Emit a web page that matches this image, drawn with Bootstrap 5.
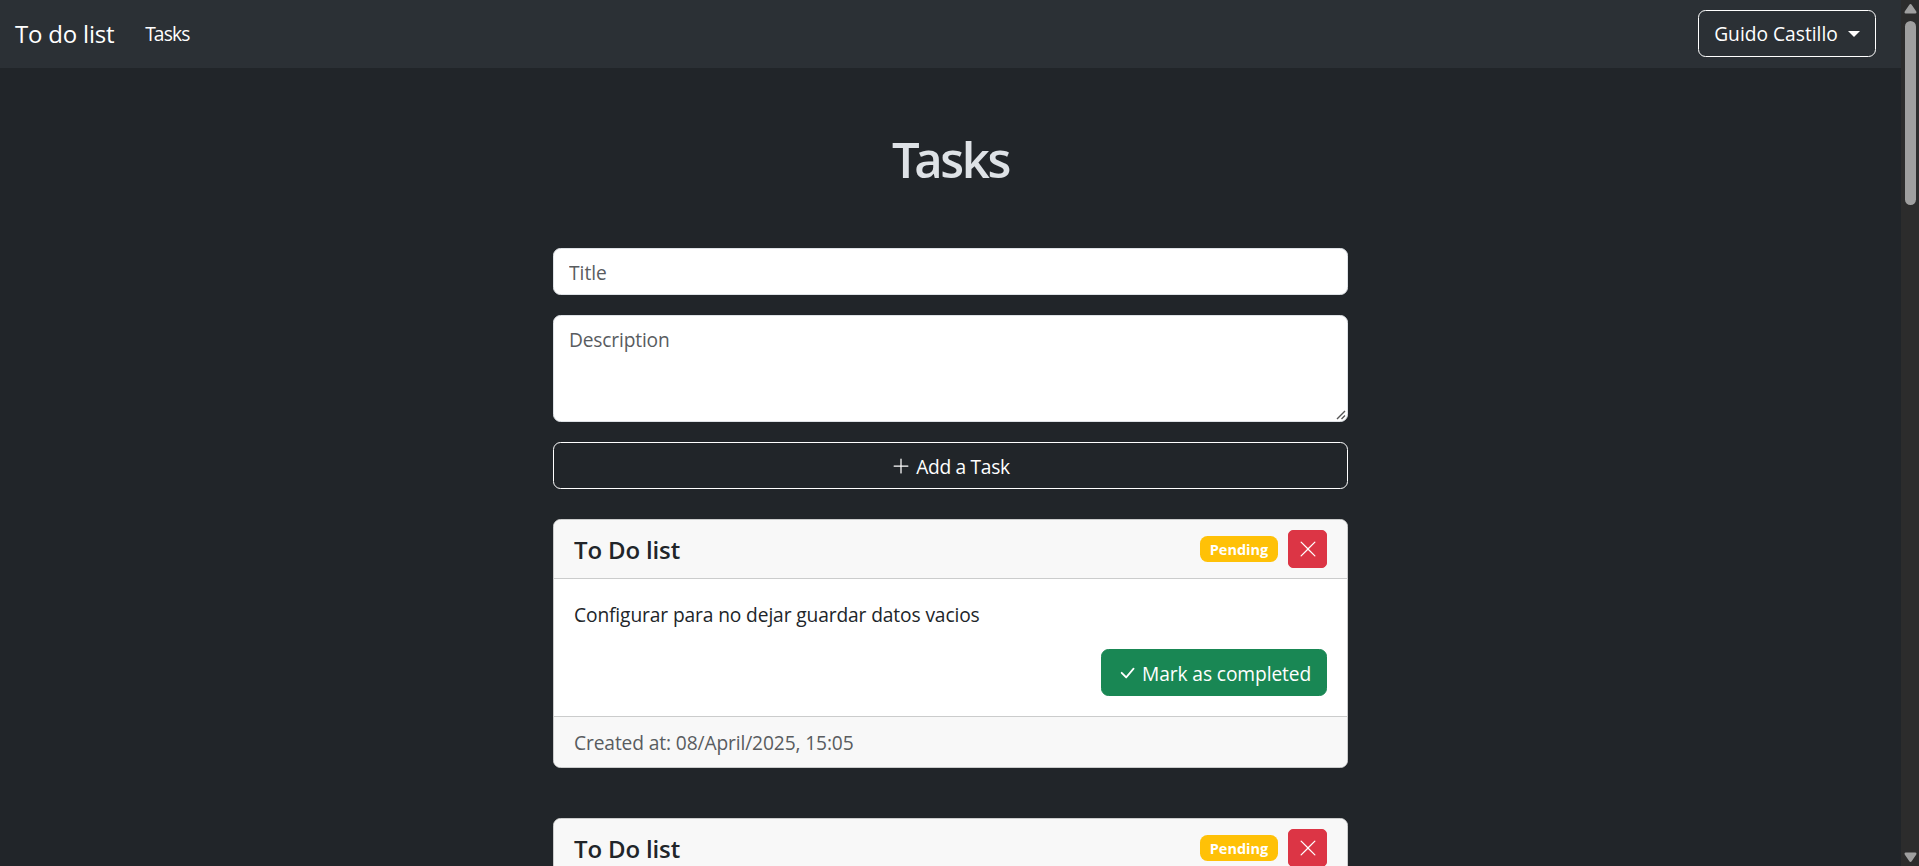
<!DOCTYPE html>
<html lang="en">
<head>
<meta charset="utf-8">
<meta name="viewport" content="width=device-width, initial-scale=1">
<title>To do list</title>
<link href="https://cdn.jsdelivr.net/npm/bootstrap@5.3.0/dist/css/bootstrap.min.css" rel="stylesheet">
<style>
  html { font-size: 20px; }
  body { font-family: "Open Sans", "Noto Sans", sans-serif; font-size: 19.2px; line-height: 30px; background: #212529; color: #212529; letter-spacing: -.12px; }
  .top-nav { background: #2b3035; height: 68px; padding: 10px 10px 11px 0; }
  .top-nav .navbar-brand { font-size: 24px; line-height: 37px; padding: 0; margin-right: 21px; letter-spacing: -.2px; }
  .top-nav .nav-link { letter-spacing: -.75px; color: #fff; padding: 9px 10px 9px; }
  .top-nav .nav-link .lead-cap { letter-spacing: -2.2px; }
  .btn { font-size: 19.2px; line-height: 30px; height: 47px; padding: 8.5px 15px 6.5px; border-radius: 7.5px; letter-spacing: -.1px; }
  .user-btn { width: 178px; padding-top: 7.5px; letter-spacing: 0; white-space: nowrap; }
  .user-btn::after { margin-left: 10px; border-top-width: 6px; border-left-width: 6px; border-right-width: 6px; vertical-align: 4px; }
  .page-title { color: #dee2e6; font-size: 49px; font-weight: 600; line-height: 60px; letter-spacing: -2.4px; margin: 61px 0 59px; }
  .page-title .lead-cap { letter-spacing: -5.5px; }
  .task-column { width: 795px; }
  .form-control, .form-control:focus { font-size: 19.2px; line-height: 30px; height: 47px; padding: 8.5px 15px 6.5px; border-color: #dee2e6; border-radius: 7.5px; color: #212529; background: #fff; }
  .form-control::placeholder { color: #595c5f; opacity: 1; }
  .form-control[name=title] { letter-spacing: 0; }
  textarea.form-control { height: 107px; min-height: 107px; letter-spacing: -.17px; resize: none; }
  .task-description { margin: 20px 0; }
  .resize-grip { right: 2px; bottom: 2px; width: 10px; height: 10px; stroke: #555; stroke-width: 1.4; }
  .add-btn { letter-spacing: -.3px; }
  .task-card { background: #fff; border: 1px solid #cbcccc; border-radius: 7.5px; margin-bottom: 50px; }
  .task-card .card-header { background: #f8f8f8; border-color: #cbcccc; height: 59px; padding: 0 20px; }
  .task-card .card-title { font-size: 24px; font-weight: 600; line-height: 30px; letter-spacing: -.15px; padding-top: 1px; }
  .task-card .card-body { padding: 20px; height: 137px; }
  .task-card .card-text { margin-bottom: 19px; line-height: 31px; }
  .task-card .card-footer { background: #f8f8f8; border-color: #cbcccc; color: #595c5f; height: 51px; padding: 11px 20px 9px; }
  .status-badge { width: 78px; height: 26px; font-size: 14.5px; line-height: 27px; padding: 0; border-radius: 7.5px; background: #ffc107; letter-spacing: 0; }
  .delete-btn { width: 39px; height: 38px; padding: 0; border-radius: 5px; }
  .btn-danger { background: #dc3545; }
  .btn-success { background: #198754; width: 226px; white-space: nowrap; }
  .glyph { width: 20px; height: 20px; fill: currentColor; flex: none; }
  .btn-success .glyph, .add-btn .glyph { margin-top: -2px; }
  .scroll-track { width: 18px; background: #2c2c2c; padding: 3px 0; }
  .scroll-thumb { width: 11px; height: 184px; border-radius: 6px; background: #9f9f9f; margin: 7px 0 auto 1px; }
  .scroll-arrow { width: 13px; height: 11px; fill: #9f9f9f; margin-left: 1px; }
</style>
</head>
<body class="d-flex vh-100 overflow-hidden">
<div class="flex-grow-1 overflow-hidden">
  <nav class="navbar navbar-expand navbar-dark top-nav">
    <div class="container-fluid">
      <a class="navbar-brand text-white" href="#">To do list</a>
      <ul class="navbar-nav me-auto">
        <li class="nav-item"><a class="nav-link" href="#"><span class="lead-cap">T</span>asks</a></li>
      </ul>
      <button class="btn btn-outline-light border-white text-white dropdown-toggle user-btn" type="button" data-bs-toggle="dropdown">Guido Castillo</button>
    </div>
  </nav>

  <main class="task-column mx-auto">
    <h1 class="page-title text-center"><span class="lead-cap">T</span>asks</h1>
    <form class="d-flex flex-column mb-0">
      <input class="form-control" type="text" name="title" placeholder="Title">
      <div class="task-description position-relative d-flex">
        <textarea class="form-control" name="description" placeholder="Description"></textarea>
        <svg class="resize-grip position-absolute" viewBox="0 0 10 10"><path d="M1 9 9 1M5.500 9 9 5.500"/></svg>
      </div>
      <button class="btn btn-outline-light border-white text-white add-btn w-100 d-flex align-items-center justify-content-center" type="button">
        <svg class="glyph me-1" viewBox="0 0 16 16"><path fill-rule="evenodd" d="M8 2a.5.5 0 0 1 .5.5v5h5a.5.5 0 0 1 0 1h-5v5a.5.5 0 0 1-1 0v-5h-5a.5.5 0 0 1 0-1h5v-5A.5.5 0 0 1 8 2"/></svg>
        Add a Task
      </button>
    </form>

    <article class="card task-card mt-4">
      <div class="card-header d-flex align-items-center">
        <h5 class="card-title mb-0 me-auto">To Do list</h5>
        <span class="badge status-badge me-2">Pending</span>
        <button class="btn btn-danger delete-btn d-flex align-items-center justify-content-center" type="button" aria-label="Delete">
          <svg class="glyph" viewBox="0 0 16 16"><path d="M2.146 2.854a.5.5 0 1 1 .708-.708L8 7.293l5.146-5.147a.5.5 0 0 1 .708.708L8.707 8l5.147 5.146a.5.5 0 0 1-.708.708L8 8.707l-5.146 5.147a.5.5 0 0 1-.708-.708L7.293 8z"/></svg>
        </button>
      </div>
      <div class="card-body d-flex flex-column">
        <p class="card-text">Configurar para no dejar guardar datos vacios</p>
        <button class="btn btn-success align-self-end d-flex align-items-center" type="button">
          <svg class="glyph me-1" viewBox="0 0 16 16"><path d="M12.736 3.97a.733.733 0 0 1 1.047 0c.286.289.29.756.01 1.05L7.88 12.01a.733.733 0 0 1-1.065.02L3.217 8.384a.757.757 0 0 1 0-1.06.733.733 0 0 1 1.047 0l3.052 3.093 5.4-6.425z"/></svg>
          Mark as completed
        </button>
      </div>
      <div class="card-footer">Created at: 08/April/2025, 15:05</div>
    </article>

    <article class="card task-card">
      <div class="card-header d-flex align-items-center">
        <h5 class="card-title mb-0 me-auto">To Do list</h5>
        <span class="badge status-badge me-2">Pending</span>
        <button class="btn btn-danger delete-btn d-flex align-items-center justify-content-center" type="button" aria-label="Delete">
          <svg class="glyph" viewBox="0 0 16 16"><path d="M2.146 2.854a.5.5 0 1 1 .708-.708L8 7.293l5.146-5.147a.5.5 0 0 1 .708.708L8.707 8l5.147 5.146a.5.5 0 0 1-.708.708L8 8.707l-5.146 5.147a.5.5 0 0 1-.708-.708L7.293 8z"/></svg>
        </button>
      </div>
    </article>
  </main>
</div>
<div class="scroll-track d-flex flex-column align-items-center flex-shrink-0" aria-hidden="true">
  <svg class="scroll-arrow" viewBox="0 0 13 11"><path d="M6.5 1Q7.2 1 8 2.2L12.3 8.5Q13 10.5 11.5 10.5H1.5Q0 10.5.7 8.5L5 2.2Q5.8 1 6.5 1z"/></svg>
  <div class="scroll-thumb"></div>
  <svg class="scroll-arrow" viewBox="0 0 13 11"><path d="M6.5 10Q7.2 10 8 8.8L12.3 2.5Q13 .5 11.5 .5H1.5Q0 .5.7 2.5L5 8.8Q5.8 10 6.5 10z"/></svg>
</div>
<script src="https://cdn.jsdelivr.net/npm/bootstrap@5.3.0/dist/js/bootstrap.bundle.min.js"></script>
</body>
</html>
